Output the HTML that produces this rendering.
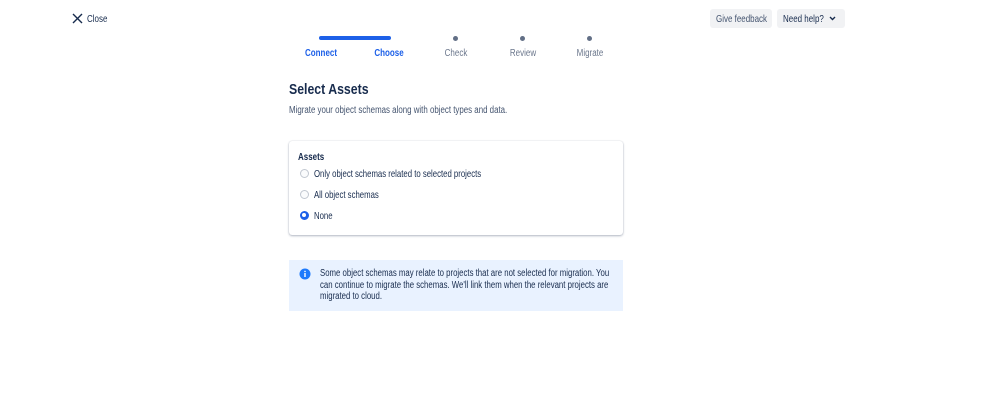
<!DOCTYPE html>
<html><head><style>
body{margin:0;width:999px;height:407px;background:#fff;font-family:"Liberation Sans",sans-serif;color:#172b4d;position:relative;overflow:hidden}
.a{position:absolute;white-space:nowrap}
.s{transform:scaleX(.76);transform-origin:left top}
.lbl{font-size:10px;color:#6b778c;transform:translateX(-50%) scaleX(.8);transform-origin:center top}
.dot{width:5px;height:5px;border-radius:50%;background:#626f86}
.radio{width:9px;height:9px;border-radius:50%;border:1px solid #c1c7d0;background:#fafbfc;box-sizing:border-box}
.rt{font-size:10.5px;color:#172b4d}
</style></head><body>
<svg class="a" style="left:72px;top:13px" width="11" height="11" viewBox="0 0 11 11"><path d="M1 1L10 10M10 1L1 10" stroke="#172b4d" stroke-width="1.4"/></svg>
<div class="a s" style="left:87px;top:13px;font-size:10.5px">Close</div>

<div class="a" style="left:710px;top:9px;width:62px;height:19px;background:#f1f2f4;border-radius:3px"></div>
<div class="a s" style="left:716px;top:13px;font-size:10.5px;color:#44546f">Give feedback</div>
<div class="a" style="left:777px;top:9px;width:68px;height:19px;background:#f1f2f4;border-radius:3px"></div>
<div class="a s" style="left:783px;top:13px;font-size:10.5px;color:#172b4d">Need help?</div>
<svg class="a" style="left:829px;top:15px" width="7" height="7" viewBox="0 0 7 7"><path d="M1 2L3.5 4.5L6 2" stroke="#172b4d" stroke-width="1.4" fill="none"/></svg>

<div class="a" style="left:319px;top:36px;width:72px;height:4px;border-radius:2px;background:#1d60e8"></div>
<div class="a dot" style="left:453px;top:36px"></div>
<div class="a dot" style="left:520px;top:36px"></div>
<div class="a dot" style="left:587px;top:36px"></div>
<div class="a lbl" style="left:321px;top:48px;color:#1d60e8;font-weight:bold">Connect</div>
<div class="a lbl" style="left:389px;top:48px;color:#1d60e8;font-weight:bold">Choose</div>
<div class="a lbl" style="left:456px;top:48px">Check</div>
<div class="a lbl" style="left:523px;top:48px">Review</div>
<div class="a lbl" style="left:590px;top:48px">Migrate</div>

<div class="a s" style="left:289px;top:81px;font-size:15px;font-weight:bold;color:#172b4d;transform:scaleX(.82)">Select Assets</div>
<div class="a s" style="left:289px;top:105px;font-size:10px;color:#44546f;transform:scaleX(.79)">Migrate your object schemas along with object types and data.</div>

<div class="a" style="left:289px;top:141px;width:334px;height:94px;border-radius:3px;box-shadow:0 1px 2px rgba(9,30,66,.3),0 0 1px rgba(9,30,66,.2)"></div>
<div class="a s" style="left:298px;top:151px;font-size:10.5px;font-weight:bold">Assets</div>
<div class="a radio" style="left:300px;top:169px"></div>
<div class="a rt s" style="left:314px;top:168px;transform:scaleX(.74)">Only object schemas related to selected projects</div>
<div class="a radio" style="left:300px;top:190px"></div>
<div class="a rt s" style="left:314px;top:189px;transform:scaleX(.74)">All object schemas</div>
<div class="a" style="left:300px;top:211px;width:9px;height:9px;border-radius:50%;background:#1d60e8;box-sizing:border-box;border:2.5px solid #1d60e8"><div style="width:4px;height:4px;border-radius:50%;background:#fff"></div></div>
<div class="a rt s" style="left:314px;top:210px;transform:scaleX(.74)">None</div>

<div class="a" style="left:289px;top:260px;width:334px;height:51px;background:#e9f2ff"></div>
<svg class="a" style="left:299px;top:268px" width="12" height="12" viewBox="0 0 12 12"><circle cx="6" cy="6" r="5.5" fill="#1d7afc"/><rect x="5.3" y="5" width="1.4" height="4" fill="#fff"/><circle cx="6" cy="3.4" r=".8" fill="#fff"/></svg>
<div class="a s" style="left:320px;top:268px;font-size:10px;line-height:11.6px;color:#172b4d;transform:scaleX(.78)">Some object schemas may relate to projects that are not selected for migration. You<br>can continue to migrate the schemas. We'll link them when the relevant projects are<br>migrated to cloud.</div>
</body></html>
